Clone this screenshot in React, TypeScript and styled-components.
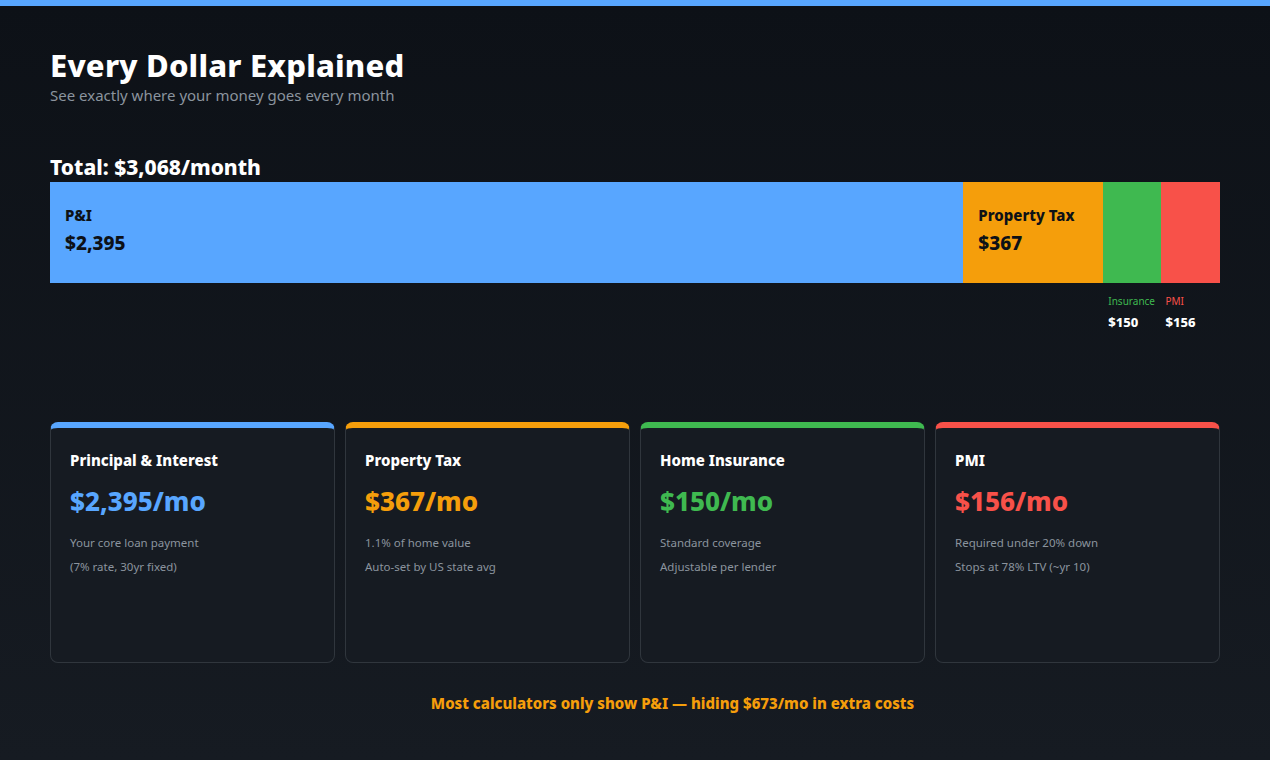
import React from "react";
import styled, { createGlobalStyle } from "styled-components";

const Global = createGlobalStyle`
  html, body { margin: 0; padding: 0; }
  body { background: #0d1117; font-family: "Noto Sans", "Open Sans", sans-serif; }
`;

const Page = styled.div`
  min-height: 760px;
  box-sizing: border-box;
  border-top: 6px solid #58a6ff;
  background: linear-gradient(180deg, #0d1117 0%, #161b22 100%);
  padding: 40px 50px 0 50px;
  color: #fff;
`;
const Title = styled.h1`
  margin: 0; font-size: 31px; font-weight: 800; line-height: 38px; letter-spacing: 0.2px;
`;
const Sub = styled.div`
  font-size: 15px; color: #8b949e; line-height: 20px; margin-top: 1px;
`;
const Total = styled.div`
  margin-top: 49px; font-size: 21px; font-weight: 800; line-height: 26px;
`;
const Bar = styled.div`
  display: flex; height: 170px; margin-top: 2px;
`;
const Seg = styled.div<{ $grow: number }>`
  flex: ${(p) => p.$grow} 1 0; display: flex; flex-direction: column; min-width: 0;
`;
const Block = styled.div<{ $c: string }>`
  height: 101px; background: ${(p) => p.$c}; padding: 23px 15px; box-sizing: border-box; color: #0d1117;
`;
const BName = styled.div` font-size: 15px; font-weight: 800; line-height: 20px; white-space: nowrap; `;
const BVal = styled.div` font-size: 19px; font-weight: 800; margin-top: 6px; line-height: 24px; `;
const Below = styled.div` padding: 11px 5px 0; `;
const LName = styled.div<{ $c: string }>` font-size: 10px; color: ${(p) => p.$c}; line-height: 14px; `;
const LVal = styled.div` font-size: 13px; font-weight: 800; margin-top: 5px; color: #fff; `;

const Cards = styled.div`
  margin-top: 70px; display: grid; grid-template-columns: repeat(4, 1fr); gap: 10px;
`;
const Card = styled.div<{ $c: string }>`
  height: 241px; box-sizing: border-box; background: #161b22; border: 1px solid #30363d;
  border-top: 6px solid ${(p) => p.$c}; border-radius: 8px; padding: 22px 19px;
`;
const CTitle = styled.div` font-size: 15px; font-weight: 800; line-height: 20px; `;
const CVal = styled.div<{ $c: string }>` font-size: 26px; font-weight: 800; color: ${(p) => p.$c}; margin-top: 15px; line-height: 32px; `;
const CDesc = styled.div` font-size: 11.5px; color: #8b949e; line-height: 24px; margin-top: 14px; `;
const Foot = styled.div`
  margin-top: 30px; text-align: center; font-size: 15px; font-weight: 800; color: #f59e0b; padding-left: 75px;
`;

const segs = [
  { n: "P&I", v: 2395, c: "#58a6ff", inside: true },
  { n: "Property Tax", v: 367, c: "#f59e0b", inside: true },
  { n: "Insurance", v: 150, c: "#3fb950", inside: false },
  { n: "PMI", v: 156, c: "#f85149", inside: false },
];
const cards = [
  { t: "Principal & Interest", v: "$2,395/mo", c: "#58a6ff", d: ["Your core loan payment", "(7% rate, 30yr fixed)"] },
  { t: "Property Tax", v: "$367/mo", c: "#f59e0b", d: ["1.1% of home value", "Auto-set by US state avg"] },
  { t: "Home Insurance", v: "$150/mo", c: "#3fb950", d: ["Standard coverage", "Adjustable per lender"] },
  { t: "PMI", v: "$156/mo", c: "#f85149", d: ["Required under 20% down", "Stops at 78% LTV (~yr 10)"] },
];

export default function App() {
  return (
    <Page>
      <Global />
      <Title>Every Dollar Explained</Title>
      <Sub>See exactly where your money goes every month</Sub>
      <Total>Total: $3,068/month</Total>
      <Bar>
        {segs.map((s) => (
          <Seg key={s.n} $grow={s.v}>
            <Block $c={s.c}>
              {s.inside && (<><BName>{s.n}</BName><BVal>${s.v.toLocaleString("en-US")}</BVal></>)}
            </Block>
            {!s.inside && (
              <Below>
                <LName $c={s.c}>{s.n}</LName>
                <LVal>${s.v}</LVal>
              </Below>
            )}
          </Seg>
        ))}
      </Bar>
      <Cards>
        {cards.map((c) => (
          <Card key={c.t} $c={c.c}>
            <CTitle>{c.t}</CTitle>
            <CVal $c={c.c}>{c.v}</CVal>
            <CDesc>{c.d[0]}<br />{c.d[1]}</CDesc>
          </Card>
        ))}
      </Cards>
      <Foot>Most calculators only show P&amp;I — hiding $673/mo in extra costs</Foot>
    </Page>
  );
}
